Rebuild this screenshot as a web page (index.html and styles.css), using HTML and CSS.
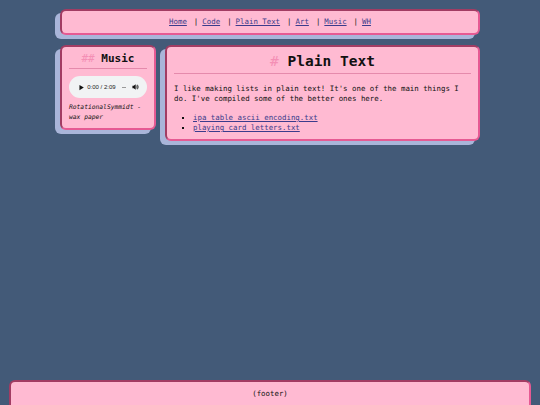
FILE: index.html
```html
<!DOCTYPE html>
<html lang="en">
<head>
<meta charset="utf-8">
<title>Plain Text</title>
<link rel="stylesheet" href="styles.css">
</head>
<body>
<div class="page">
  <div class="container">
    <nav class="box nav">
      <a href="#">Home</a><span class="sep">|</span><a href="#">Code</a><span class="sep">|</span><a href="#">Plain Text</a><span class="sep">|</span><a href="#">Art</a><span class="sep">|</span><a href="#">Music</a><span class="sep">|</span><a href="#">WH</a>
    </nav>
    <div class="columns">
      <aside class="box side">
        <h2 class="side-title"><span class="hash">##</span> Music</h2>
        <div class="player">
          <svg class="play" width="6" height="7" viewBox="0 0 6 7"><path d="M0.5 0.5 L5.5 3.5 L0.5 6.5 Z" fill="#111"/></svg>
          <span class="time">0:00 / 2:09</span>
          <span class="track"></span>
          <svg class="vol" width="8" height="8" viewBox="0 0 8 8"><path d="M0.5 2.7 H2 L4.2 0.8 V7.2 L2 5.3 H0.5 Z" fill="#111"/><path d="M5.3 2.4 Q6.4 4 5.3 5.6" stroke="#111" stroke-width="0.9" fill="none"/><path d="M6.2 1.4 Q8 4 6.2 6.6" stroke="#111" stroke-width="0.9" fill="none"/></svg>
        </div>
        <p class="caption">RotationalSymmidt - wax paper</p>
      </aside>
      <main class="box main">
        <h1 class="title"><span class="hash">#</span> Plain Text</h1>
        <p class="intro">I like making lists in plain text! It's one of the main things I do. I've compiled some of the better ones here.</p>
        <ul class="files">
          <li><a href="#">ipa table ascii encoding.txt</a></li>
          <li><a href="#">playing card letters.txt</a></li>
        </ul>
      </main>
    </div>
  </div>
  <footer class="box footer">(footer)</footer>
</div>
</body>
</html>
```
FILE: styles.css
```css
html, body {
  margin: 0;
  padding: 0;
  background: #435a78;
}
body {
  font-family: "DejaVu Sans Mono", "Liberation Mono", monospace;
  font-size: 7.4px;
  line-height: 10px;
  color: #111;
}
.page {
  height: 100vh;
  overflow: hidden;
  display: flex;
  flex-direction: column;
}
.container {
  width: 420px;
  margin: 9px auto 0;
}
.box {
  background: #ffbad2;
  border: 2px solid;
  border-color: #a23c63 #e65a93 #e65a93 #a23c63;
  border-radius: 6px;
  box-sizing: border-box;
}
.nav, .side, .main {
  box-shadow: -5px 4px 0 #a9b5d9;
}
a {
  color: #3b3c8c;
  text-decoration: underline;
}
.nav {
  height: 26px;
  display: flex;
  align-items: center;
  justify-content: center;
}
.sep {
  margin: 0 4px 0 7px;
}
.columns {
  display: flex;
  align-items: flex-start;
  gap: 9px;
  margin-top: 10px;
}
.side {
  width: 96px;
  padding: 5px 7px 6px;
}
.main {
  flex: 1;
  padding: 5px 7px 6px;
}
.hash {
  color: #f48fb5;
  font-weight: normal;
}
.side-title {
  margin: 0;
  font-size: 11px;
  line-height: 14px;
  text-align: center;
  border-bottom: 1px solid #e58aac;
  padding-bottom: 2px;
}
.title {
  margin: 0;
  font-size: 14.5px;
  line-height: 18px;
  text-align: center;
  border-bottom: 1px solid #e58aac;
  padding-bottom: 3px;
}
.player {
  margin-top: 7px;
  height: 22px;
  border-radius: 11px;
  background: #f1f3f4;
  display: flex;
  align-items: center;
  padding: 0 8px 0 10px;
  font-family: "Liberation Sans", Arial, sans-serif;
  font-size: 6px;
  color: #222;
}
.play {
  margin-right: 3px;
}
.time {
  white-space: nowrap;
}
.track {
  width: 5px;
  height: 1px;
  background: #999;
  margin: 0 6px 0 6px;
}
.caption {
  margin: 4px 0 0;
  font-size: 6.3px;
  font-style: italic;
  line-height: 10px;
}
.intro {
  margin: 10px 0 0;
}
.files {
  margin: 9px 0 0;
  padding-left: 19px;
  list-style: square;
}
.footer {
  margin: auto 9px -15px;
  height: 40px;
  box-shadow: none;
  text-align: center;
  padding-top: 7px;
}
```
